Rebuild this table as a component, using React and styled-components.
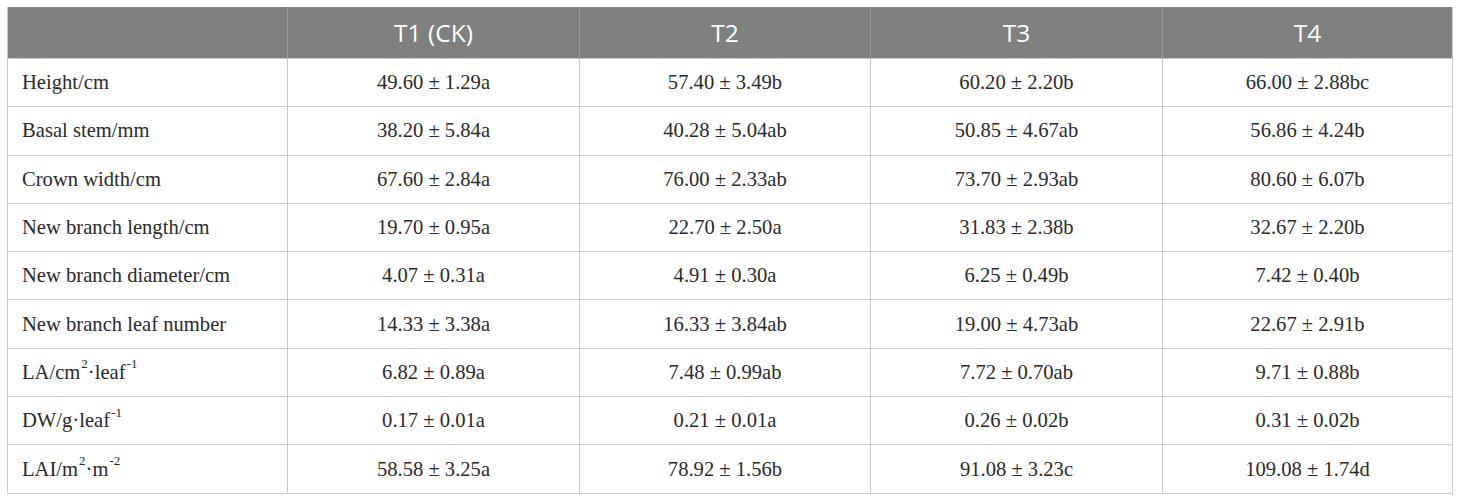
import React from "react";
import styled, { createGlobalStyle } from "styled-components";

const GlobalStyle = createGlobalStyle`
  body {
    margin: 0;
    background: #ffffff;
  }
`;

const Page = styled.div`
  padding: 7px 8px 8px 7px;
`;

const Grid = styled.div`
  display: grid;
  grid-template-columns: 280px 292px 291px 292px 290px;
  border-left: 1px solid #c9c9c9;
`;

const HeadCell = styled.div`
  height: 52px;
  box-sizing: border-box;
  background: #7f8180;
  color: #ffffff;
  font-family: "Open Sans", "Liberation Sans", sans-serif;
  font-size: 24.5px;
  display: flex;
  align-items: center;
  justify-content: center;
  border-right: 1px solid ${({ last }) => (last ? "#c9c9c9" : "#9a9b9a")};
  border-bottom: 1px solid #c9c9c9;
`;

const Cell = styled.div`
  height: 48.3px;
  box-sizing: border-box;
  display: flex;
  align-items: center;
  justify-content: ${({ label }) => (label ? "flex-start" : "center")};
  padding-left: ${({ label }) => (label ? "14px" : "0")};
  font-family: "Liberation Serif", "Times New Roman", serif;
  font-size: 20.6px;
  color: #2a2a2a;
  border-right: 1px solid #c9c9c9;
  border-bottom: 1px solid #c9c9c9;

  sup {
    font-size: 13px;
    line-height: 0;
    vertical-align: baseline;
    position: relative;
    top: -8px;
    margin-left: 1px;
  }
`;

const headers = ["", "T1 (CK)", "T2", "T3", "T4"];

const rows = [
  [<>Height/cm</>, "49.60 ± 1.29a", "57.40 ± 3.49b", "60.20 ± 2.20b", "66.00 ± 2.88bc"],
  [<>Basal stem/mm</>, "38.20 ± 5.84a", "40.28 ± 5.04ab", "50.85 ± 4.67ab", "56.86 ± 4.24b"],
  [<>Crown width/cm</>, "67.60 ± 2.84a", "76.00 ± 2.33ab", "73.70 ± 2.93ab", "80.60 ± 6.07b"],
  [<>New branch length/cm</>, "19.70 ± 0.95a", "22.70 ± 2.50a", "31.83 ± 2.38b", "32.67 ± 2.20b"],
  [<>New branch diameter/cm</>, "4.07 ± 0.31a", "4.91 ± 0.30a", "6.25 ± 0.49b", "7.42 ± 0.40b"],
  [<>New branch leaf number</>, "14.33 ± 3.38a", "16.33 ± 3.84ab", "19.00 ± 4.73ab", "22.67 ± 2.91b"],
  [<>LA/cm<sup>2</sup>·leaf<sup>-1</sup></>, "6.82 ± 0.89a", "7.48 ± 0.99ab", "7.72 ± 0.70ab", "9.71 ± 0.88b"],
  [<>DW/g·leaf<sup>-1</sup></>, "0.17 ± 0.01a", "0.21 ± 0.01a", "0.26 ± 0.02b", "0.31 ± 0.02b"],
  [<>LAI/m<sup>2</sup>·m<sup>-2</sup></>, "58.58 ± 3.25a", "78.92 ± 1.56b", "91.08 ± 3.23c", "109.08 ± 1.74d"],
];

export default function App() {
  return (
    <Page>
      <GlobalStyle />
      <Grid>
        {headers.map((h, i) => (
          <HeadCell key={i} last={i === headers.length - 1}>
            {h}
          </HeadCell>
        ))}
        {rows.map((row, r) =>
          row.map((v, c) => (
            <Cell key={`${r}-${c}`} label={c === 0}>
              {v}
            </Cell>
          ))
        )}
      </Grid>
    </Page>
  );
}
